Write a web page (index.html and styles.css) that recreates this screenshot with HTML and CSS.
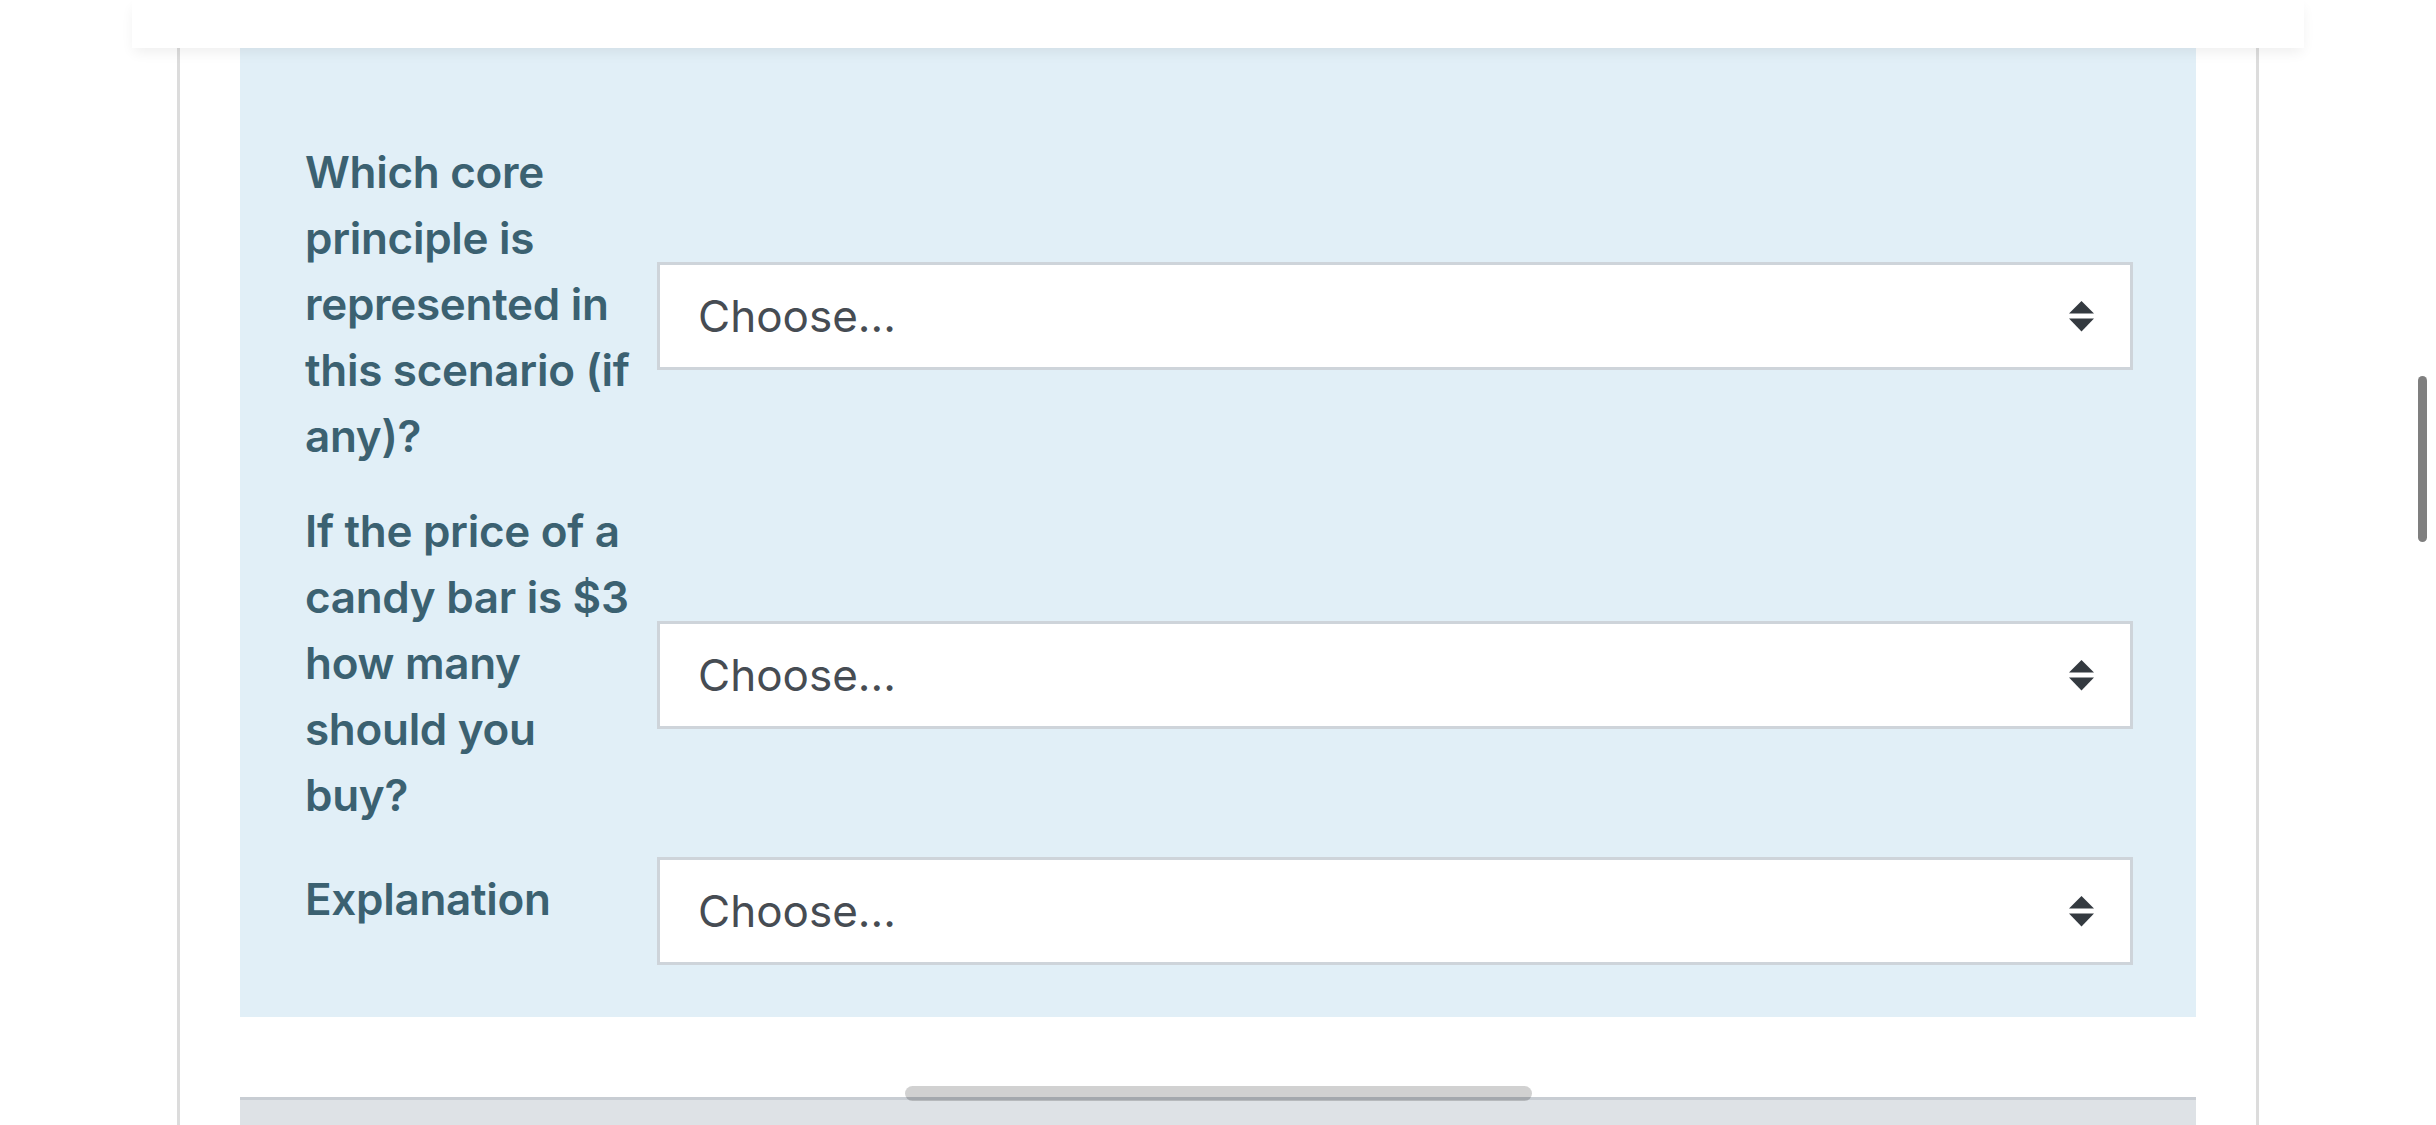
FILE: index.html
```html
<!DOCTYPE html>
<html lang="en">
<head>
<meta charset="utf-8">
<title>Question</title>
<link rel="stylesheet" href="styles.css">
</head>
<body>
<header class="topbar"></header>
<main class="page">
  <div class="card">
    <div class="formulation">
      <div class="qrow">
        <div class="qlabel">Which core principle is represented in this scenario (if any)?</div>
        <div class="qselect">
          <span class="qselect-text">Choose...</span>
          <svg class="qselect-arrows" width="25" height="31" viewBox="0 0 25 31"><polygon points="0,12.5 12.5,0 25,12.5"/><polygon points="0,17.5 25,17.5 12.5,30.5"/></svg>
        </div>
      </div>
      <div class="qrow">
        <div class="qlabel">If the price of a candy bar is $3 how many should you buy?</div>
        <div class="qselect">
          <span class="qselect-text">Choose...</span>
          <svg class="qselect-arrows" width="25" height="31" viewBox="0 0 25 31"><polygon points="0,12.5 12.5,0 25,12.5"/><polygon points="0,17.5 25,17.5 12.5,30.5"/></svg>
        </div>
      </div>
      <div class="qrow">
        <div class="qlabel">Explanation</div>
        <div class="qselect">
          <span class="qselect-text">Choose...</span>
          <svg class="qselect-arrows" width="25" height="31" viewBox="0 0 25 31"><polygon points="0,12.5 12.5,0 25,12.5"/><polygon points="0,17.5 25,17.5 12.5,30.5"/></svg>
        </div>
      </div>
    </div>
    <div class="outcome"></div>
  </div>
</main>
<div class="hscroll"></div>
<div class="vscroll"></div>
</body>
</html>
```
FILE: styles.css
```css
html, body {
  margin: 0;
  padding: 0;
  background: #ffffff;
  overflow: hidden;
}
body {
  font-family: Inter, "Noto Sans", "Liberation Sans", sans-serif;
  width: 2436px;
  height: 1125px;
}
.topbar {
  position: fixed;
  top: 0;
  left: 132px;
  right: 132px;
  height: 48px;
  background: #ffffff;
  box-shadow: 0 6px 14px -2px rgba(0, 0, 0, 0.07);
  z-index: 5;
}
.page {
  margin: 0 177px;
}
.card {
  border-left: 3px solid #dcdcdc;
  border-right: 3px solid #dcdcdc;
  padding: 0 60px;
  height: 1125px;
  box-sizing: border-box;
}
.formulation {
  background: #e1eff7;
  padding: 139px 63px 52px 65px;
  display: flex;
  flex-direction: column;
  gap: 5px;
}
.qrow {
  display: flex;
  align-items: center;
}
.qlabel {
  flex: 0 0 352px;
  box-sizing: border-box;
  padding-right: 18px;
  padding-bottom: 24px;
  font-size: 44px;
  line-height: 66px;
  font-weight: 600;
  letter-spacing: -0.3px;
  color: #3b6171;
}
.qselect {
  flex: 1;
  height: 108px;
  box-sizing: border-box;
  border: 3px solid #ced4da;
  background: #ffffff;
  display: flex;
  align-items: center;
  justify-content: space-between;
  padding: 0 36px 0 38px;
}
.qselect-text {
  font-size: 44px;
  font-weight: 400;
  color: #464c53;
}
.qselect-arrows {
  fill: #343a40;
  display: block;
}
.outcome {
  margin-top: 80px;
  height: 60px;
  background: #dee2e6;
  border-top: 3px solid #c8cdd3;
}
.hscroll {
  position: fixed;
  left: 905px;
  top: 1086px;
  width: 627px;
  height: 15px;
  border-radius: 8px;
  background: rgba(0, 0, 0, 0.18);
  z-index: 6;
}
.vscroll {
  position: fixed;
  left: 2418px;
  top: 376px;
  width: 9px;
  height: 166px;
  border-radius: 5px;
  background: rgba(0, 0, 0, 0.5);
  z-index: 6;
}
```
